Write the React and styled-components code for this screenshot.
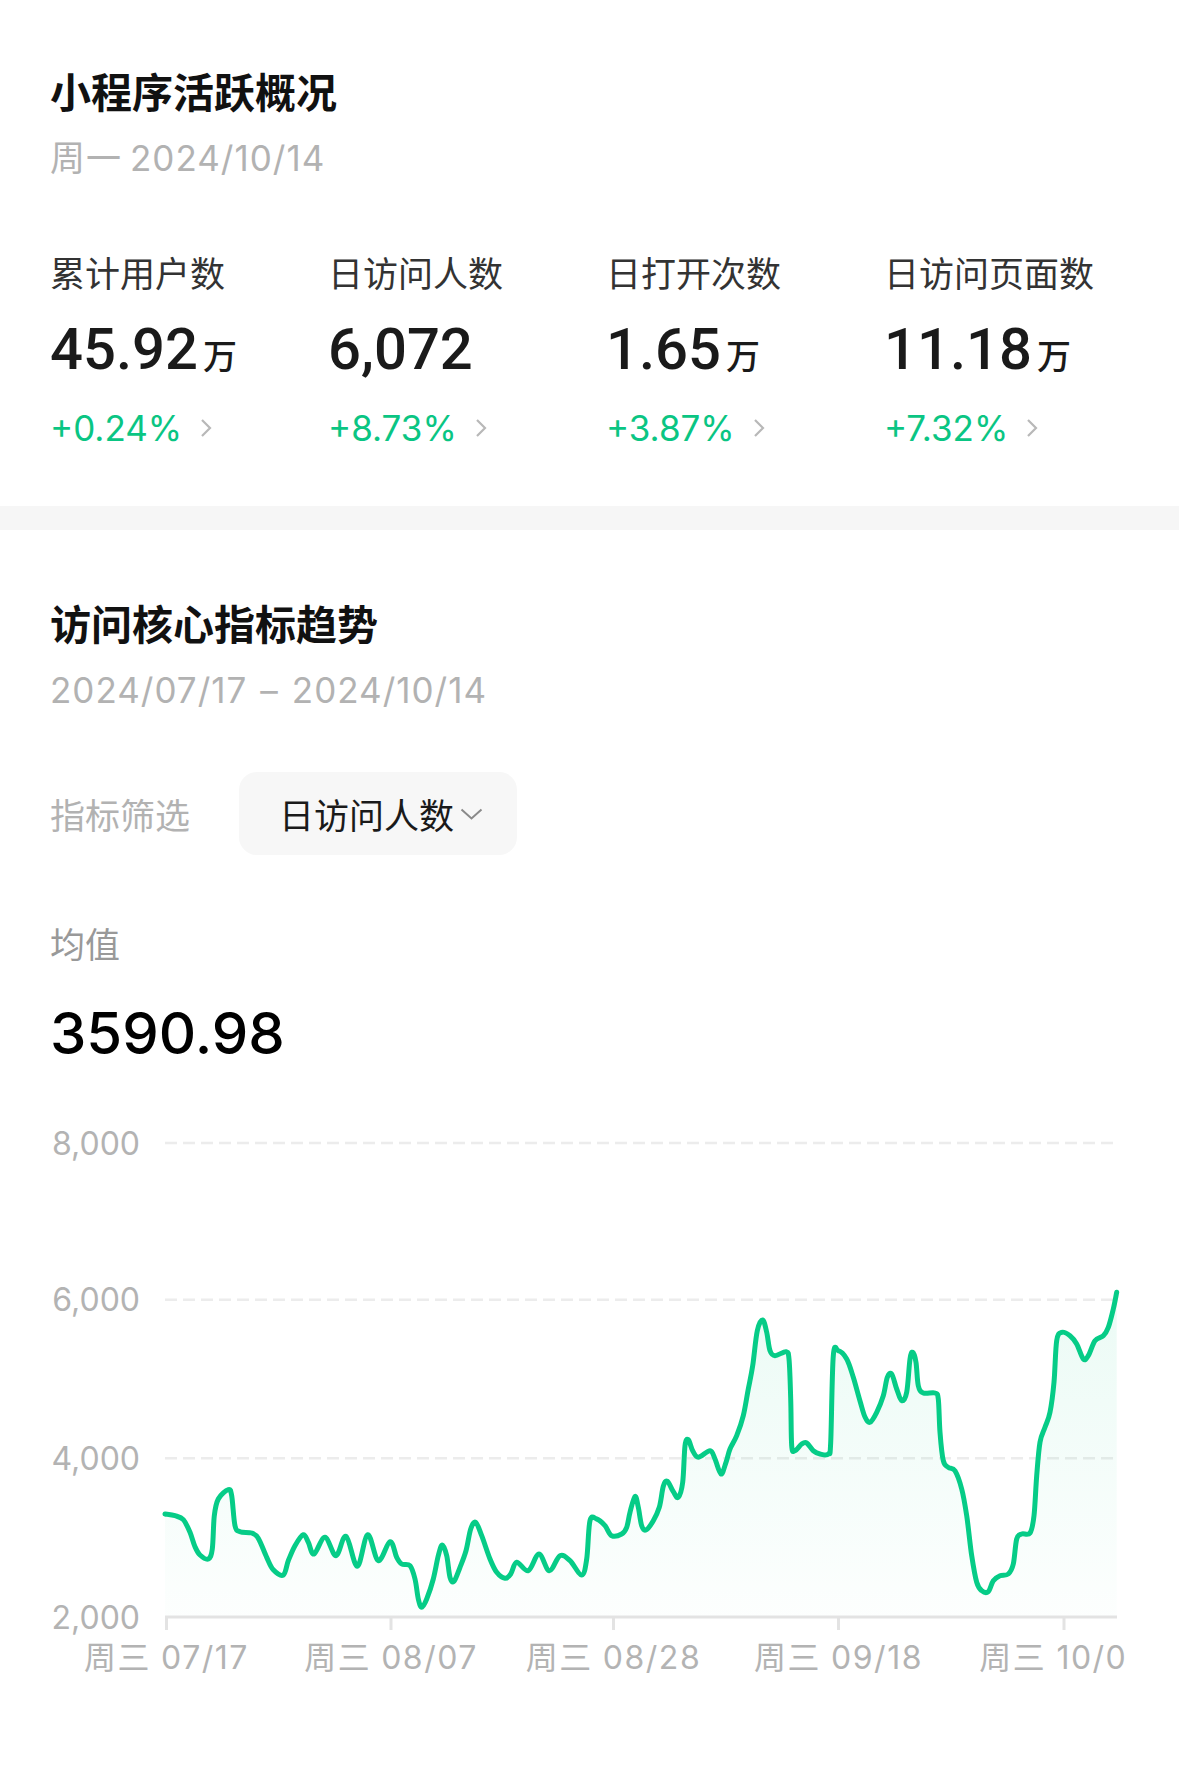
import React from "react";
import styled, { createGlobalStyle } from "styled-components";

const GlobalStyle = createGlobalStyle`
  body {
    margin: 0;
    background: #fff;
    font-family: "Inter", "Noto Sans CJK SC", sans-serif;
    -webkit-font-smoothing: antialiased;
  }
`;

const Page = styled.div`
  width: 1179px;
  min-height: 1785px;
  background: #fff;
`;

const Section = styled.section`
  padding: ${(p) => p.$top}px 50px ${(p) => p.$bottom}px;
`;

const Title = styled.h2`
  margin: 0;
  font-family: "Noto Sans CJK SC", sans-serif;
  font-size: 41px;
  line-height: 56px;
  font-weight: 600;
  color: #111;
`;

const SubTitle = styled.div`
  margin-top: 16px;
  font-size: 35px;
  line-height: 48px;
  letter-spacing: 1px;
  color: #b2b2b2;
`;

const Gap = styled.span`
  display: inline-block;
  width: ${(p) => p.$w}px;
`;

const StatGrid = styled.div`
  margin-top: 66px;
  display: grid;
  grid-template-columns: repeat(4, 278px);
`;

const StatLabel = styled.div`
  font-family: "Noto Sans CJK SC", sans-serif;
  font-size: 35px;
  line-height: 48px;
  color: #333;
`;

const StatValue = styled.div`
  margin-top: 18px;
  height: 70px;
  display: flex;
  align-items: baseline;
  gap: 5px;
  line-height: 70px;
  color: #1a1a1a;
`;

const Num = styled.span`
  font-family: "Roboto", sans-serif;
  font-size: 58px;
  font-weight: 500;
`;

const Unit = styled.span`
  font-family: "Noto Sans CJK SC", sans-serif;
  font-size: 34px;
  font-weight: 500;
`;

const Trend = styled.div`
  margin-top: 20px;
  display: flex;
  align-items: center;
  gap: 18px;
  font-size: 35px;
  line-height: 48px;
  color: #0ac583;
`;

const Band = styled.div`
  height: 24px;
  background: #f6f6f6;
`;

const FilterRow = styled.div`
  margin-top: 58px;
  display: flex;
  align-items: center;
  gap: 49px;
`;

const FilterLabel = styled.span`
  font-family: "Noto Sans CJK SC", sans-serif;
  font-size: 35px;
  color: #b2b2b2;
`;

const Select = styled.div`
  box-sizing: border-box;
  width: 278px;
  height: 83px;
  padding-left: 40px;
  display: flex;
  align-items: center;
  gap: 6px;
  border-radius: 18px;
  background: #f7f7f7;
  font-family: "Noto Sans CJK SC", sans-serif;
  font-size: 35px;
  color: #1a1a1a;
`;

const AvgLabel = styled.div`
  margin-top: 64px;
  font-family: "Noto Sans CJK SC", sans-serif;
  font-size: 35px;
  line-height: 48px;
  color: #999;
`;

const AvgValue = styled.div`
  margin-top: 31px;
  font-size: 58px;
  line-height: 70px;
  font-weight: 500;
  color: #000;
`;

const ChartSvg = styled.svg`
  display: block;
  margin-top: 31px;
`;

const AxisText = styled.text`
  font-family: "Inter", "Noto Sans CJK SC", sans-serif;
  font-size: 32px;
  letter-spacing: ${(p) => p.$spacing || 0}px;
  fill: #b3b3b3;
`;

const stats = [
  { label: "累计用户数", value: "45.92", unit: "万", trend: "+0.24%" },
  { label: "日访问人数", value: "6,072", unit: "", trend: "+8.73%" },
  { label: "日打开次数", value: "1.65", unit: "万", trend: "+3.87%" },
  { label: "日访问页面数", value: "11.18", unit: "万", trend: "+7.32%" },
];

// chart geometry, in page pixels
const PLOT_LEFT = 165;
const PLOT_RIGHT = 1117;
const AXIS_Y = 1618;
const grid = [
  { label: "8,000", y: 1144 },
  { label: "6,000", y: 1300.7 },
  { label: "4,000", y: 1459.3 },
];
const ticks = [
  { date: "07/17", x: 166.5 },
  { date: "08/07", x: 391 },
  { date: "08/28", x: 613.5 },
  { date: "09/18", x: 838.5 },
  { date: "10/09", x: 1064 },
];

// traced curve of 日访问人数, 07/17 - 10/14
const points = [
  [165, 1515], [175, 1516.7], [183.3, 1520.7], [190, 1533.3], [195, 1547.7], [200, 1556],
  [208.3, 1560], [212.3, 1550], [214.3, 1516.7], [218.3, 1500], [228.3, 1490.7], [231.7, 1496.7],
  [235, 1526.7], [240, 1532.7], [251.7, 1534], [258.3, 1539.3], [266.7, 1558.3], [273.3, 1570.7],
  [283.3, 1576], [288.3, 1561.7], [295, 1546.7], [303.3, 1535.7], [308.3, 1543.3], [314, 1555],
  [325, 1538.3], [336, 1556.7], [346, 1537.3], [357.3, 1567.3], [367.7, 1535.7], [378.3, 1561.7],
  [390, 1542.7], [396.7, 1558.3], [401.7, 1565], [410, 1566.7], [415, 1580], [418.3, 1600],
  [421.7, 1608.3], [426.7, 1600], [433.3, 1580], [438.3, 1556.7], [442.3, 1546], [446.7, 1556.7],
  [450, 1578.3], [454, 1582.3], [460, 1568.3], [466, 1551.7], [470.7, 1530], [475.7, 1523.3],
  [481.7, 1536.7], [490, 1560], [496.7, 1573.3], [505, 1579.3], [510.7, 1575], [516.7, 1563.3],
  [528.3, 1571.7], [539, 1555], [549.3, 1571.7], [560, 1556.7], [570, 1561.7], [581.7, 1576],
  [586.7, 1560], [590, 1521.7], [596.7, 1520], [605, 1526.7], [611.7, 1536.7], [621.7, 1535],
  [626.7, 1528.3], [630, 1513.3], [635, 1497.3], [638.3, 1508.3], [641.7, 1526.7], [646, 1531],
  [653.3, 1521.7], [659.3, 1508.3], [663.3, 1487.3], [667.3, 1482.3], [673.3, 1492.7], [678.3, 1498.3],
  [682.7, 1483.3], [685, 1446.7], [688.3, 1440.7], [692.7, 1451.7], [698.3, 1458.3], [710, 1451.7],
  [715, 1460], [721, 1475], [726, 1463.3], [730, 1450], [736.7, 1436.7], [743.3, 1416.7],
  [748.3, 1390], [752.7, 1366.7], [757.3, 1331.7], [762.7, 1321], [766.7, 1333.3], [770, 1351.7],
  [775, 1356.7], [786, 1352.7], [789, 1360], [790.7, 1400], [791.7, 1446.7], [795, 1451.7],
  [801.7, 1445], [806.7, 1444], [813.3, 1451.7], [820, 1455], [828.3, 1455], [830.7, 1443.3],
  [833.3, 1356.7], [838.3, 1351.7], [846.7, 1360], [853.3, 1378.3], [860, 1402], [865, 1418],
  [870, 1423.3], [876.7, 1413.3], [883.3, 1396.7], [887.3, 1378.3], [891.7, 1375], [896.7, 1390],
  [901.7, 1401.7], [906.7, 1393.3], [910, 1360], [912.7, 1353.3], [916, 1363.3], [918.3, 1386.7],
  [923.3, 1394], [935, 1394], [938.3, 1400], [940, 1433.3], [943.3, 1461.7], [948.3, 1468.3],
  [955, 1471.7], [961.7, 1490], [966.7, 1516.7], [971.7, 1556.7], [976.7, 1583.3], [981.7, 1591.7],
  [988.3, 1592.7], [993.3, 1581.7], [1000, 1576.7], [1008.3, 1575], [1013.3, 1565], [1016.7, 1540],
  [1021.7, 1535], [1030, 1534], [1034, 1516.7], [1036.7, 1476.7], [1040, 1443.3], [1045, 1428.3],
  [1050, 1413.3], [1054, 1383.3], [1056.7, 1341.7], [1061.7, 1333.3], [1070, 1336.7], [1076.7, 1345],
  [1083.3, 1360], [1088.3, 1356.7], [1095, 1341.7], [1103.3, 1336.7], [1108.3, 1328.3], [1113.3, 1310],
  [1116.7, 1293.3],
];

const clamp = (v, a, b) => Math.min(Math.max(v, Math.min(a, b)), Math.max(a, b));

function smoothPath(pts) {
  let d = `M${pts[0][0]},${pts[0][1]}`;
  for (let i = 0; i < pts.length - 1; i++) {
    const p0 = pts[i - 1] || pts[i];
    const p1 = pts[i];
    const p2 = pts[i + 1];
    const p3 = pts[i + 2] || p2;
    const c1x = clamp(p1[0] + (p2[0] - p0[0]) / 6, p1[0], p2[0]);
    const c1y = p1[1] + (p2[1] - p0[1]) / 6;
    const c2x = clamp(p2[0] - (p3[0] - p1[0]) / 6, p1[0], p2[0]);
    const c2y = p2[1] - (p3[1] - p1[1]) / 6;
    d += ` C${c1x.toFixed(1)},${c1y.toFixed(1)} ${c2x.toFixed(1)},${c2y.toFixed(1)} ${p2[0]},${p2[1]}`;
  }
  return d;
}

const linePath = smoothPath(points);
const areaPath = `${linePath} L${points[points.length - 1][0]},${AXIS_Y} L${points[0][0]},${AXIS_Y} Z`;

const ChevronRight = () => (
  <svg width="12" height="20" viewBox="0 0 12 20">
    <path d="M2 2 L10 10 L2 18" fill="none" stroke="#b8b8b8" strokeWidth="2.2" />
  </svg>
);

const ChevronDown = () => (
  <svg width="23" height="12" viewBox="0 0 23 12">
    <path d="M1.5 1.5 L11.5 10.5 L21.5 1.5" fill="none" stroke="#8a8a8a" strokeWidth="2" />
  </svg>
);

const TrendChart = () => (
  <ChartSvg width="1077" height="590" viewBox="50 1100 1077 590">
    <defs>
      <linearGradient id="area" x1="0" y1="0" x2="0" y2="1">
        <stop offset="0" stopColor="#07c983" stopOpacity="0.08" />
        <stop offset="1" stopColor="#07c983" stopOpacity="0.01" />
      </linearGradient>
    </defs>
    {grid.map((g) => (
      <g key={g.label}>
        <AxisText x="140" y={g.y} textAnchor="end" dominantBaseline="central">
          {g.label}
        </AxisText>
        <line
          x1={PLOT_LEFT}
          x2={1113}
          y1={g.y}
          y2={g.y}
          stroke="#ececec"
          strokeWidth="2.5"
          strokeDasharray="12 6"
        />
      </g>
    ))}
    <AxisText x="140" y={AXIS_Y} textAnchor="end" dominantBaseline="central">
      2,000
    </AxisText>
    <path d={areaPath} fill="url(#area)" />
    <line x1={PLOT_LEFT} x2={PLOT_RIGHT} y1={AXIS_Y} y2={AXIS_Y} stroke="#e3e3e3" strokeWidth="3" />
    {ticks.map((t) => (
      <g key={t.date}>
        <line x1={t.x} x2={t.x} y1={AXIS_Y} y2={AXIS_Y + 13} stroke="#e3e3e3" strokeWidth="3" />
        <AxisText
          x={t.x}
          y="1658"
          textAnchor="middle"
          dominantBaseline="central"
          $spacing={1.5}
        >
          周三
          <tspan dx="10">{t.date}</tspan>
        </AxisText>
      </g>
    ))}
    <path
      d={linePath}
      fill="none"
      stroke="#06cc87"
      strokeWidth="5"
      strokeLinejoin="round"
      strokeLinecap="round"
    />
  </ChartSvg>
);

export default function App() {
  return (
    <Page>
      <GlobalStyle />
      <Section $top={62} $bottom={54}>
        <Title>小程序活跃概况</Title>
        <SubTitle>
          周一<Gap $w={8} />2024/10/14
        </SubTitle>
        <StatGrid>
          {stats.map((s) => (
            <div key={s.label}>
              <StatLabel>{s.label}</StatLabel>
              <StatValue>
                <Num>{s.value}</Num>
                {s.unit && <Unit>{s.unit}</Unit>}
              </StatValue>
              <Trend>
                {s.trend}
                <ChevronRight />
              </Trend>
            </div>
          ))}
        </StatGrid>
      </Section>
      <Band />
      <Section $top={64} $bottom={0}>
        <Title>访问核心指标趋势</Title>
        <SubTitle>
          2024/07/17<Gap $w={13} />–<Gap $w={13} />2024/10/14
        </SubTitle>
        <FilterRow>
          <FilterLabel>指标筛选</FilterLabel>
          <Select>
            日访问人数
            <ChevronDown />
          </Select>
        </FilterRow>
        <AvgLabel>均值</AvgLabel>
        <AvgValue>3590.98</AvgValue>
        <TrendChart />
      </Section>
    </Page>
  );
}
